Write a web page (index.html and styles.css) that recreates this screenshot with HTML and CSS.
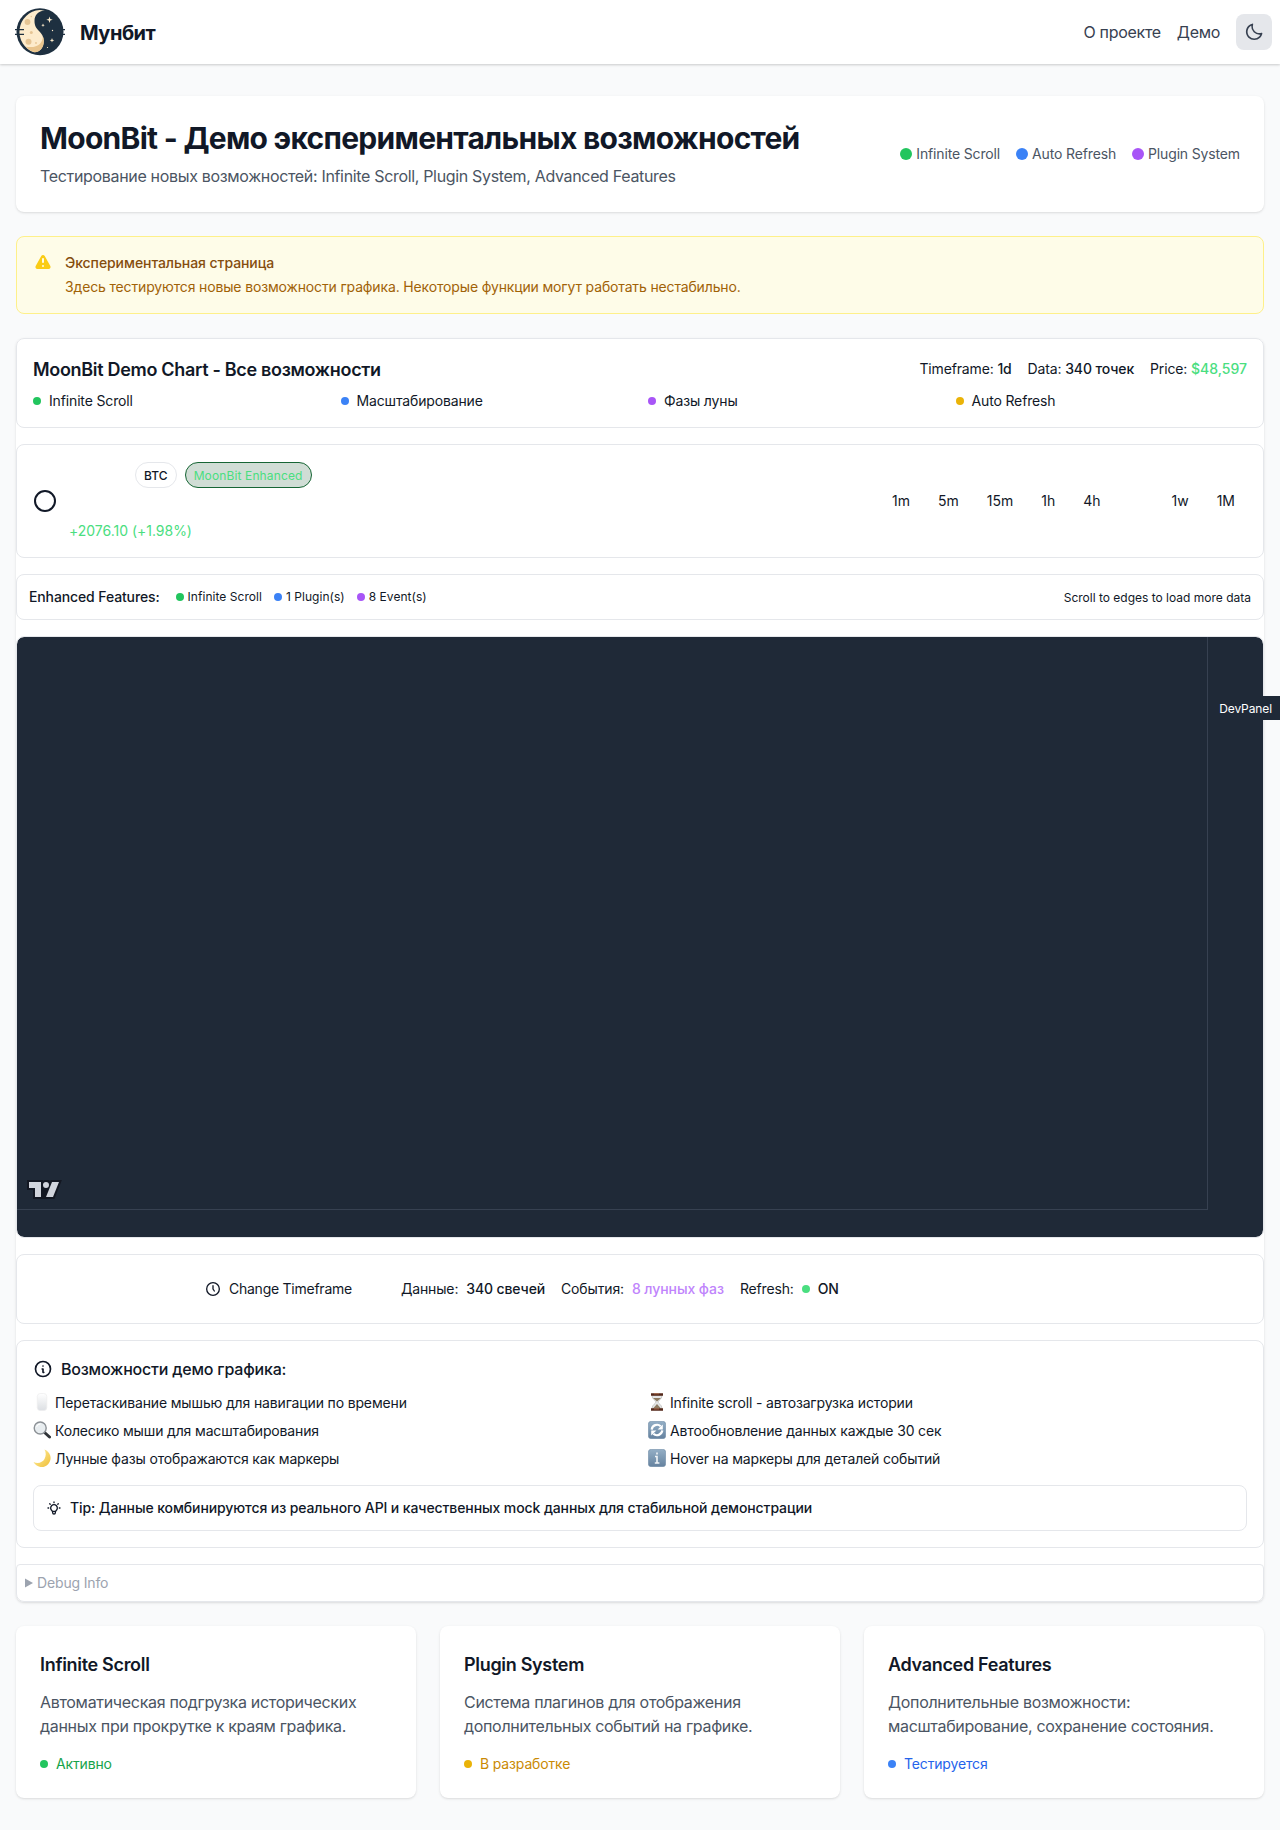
FILE: index.html
```html
<!DOCTYPE html>
<html lang="ru">
<head>
<meta charset="utf-8">
<title>Мунбит</title>
<link rel="stylesheet" href="styles.css">
</head>
<body>
<header class="topbar">
  <div class="brand">
    <svg class="brand-logo" viewBox="0 0 64 64">
      <circle cx="32" cy="31.800" r="23.500" fill="#1e3040"/>
      <path d="M31.500 10A21.800 21.800 0 0 0 26 52.300C31.500 52.500 35.800 48 35.800 41C35.800 36.500 33.500 33.500 31 31C28.500 28.500 26.500 26 26.500 21C26.500 15 30 11 37 10.500Z" fill="#fdebcb"/>
      <path d="M34.800 36.500C34.800 43 30 48.500 18 46.800C20.500 49.800 23.500 51.800 27 52.200C32 52 35.800 47.500 35.800 41C35.800 39 35.400 37.800 34.800 36.500Z" fill="#e9c48c"/>
      <g fill="#e6c594"><circle cx="19.500" cy="22" r="2.900"/><circle cx="20.500" cy="41.800" r="3"/><circle cx="23.300" cy="32.500" r="1.500"/><circle cx="23.300" cy="16.500" r=".7"/><circle cx="28" cy="43" r=".9"/></g>
      <g fill="#fdebcb"><path d="M41.500 16.500l.8 2.400 2.400.8-2.400.8-.8 2.400-.8-2.400-2.400-.8 2.400-.8zM44 38l.6 1.700 1.700.6-1.700.6-.6 1.700-.6-1.700-1.700-.6 1.700-.6zM35 23.500l.5 1.200 1.200.5-1.200.5-.5 1.200-.5-1.200-1.200-.5 1.200-.5z"/><circle cx="44.500" cy="30.500" r=".7"/><circle cx="39.500" cy="47.500" r=".6"/></g>
      <path d="M7 29.700h9M7 34.300h9M54 29.700h3M54 34.300h3" stroke="#1e3040" stroke-width="1.300"/>
    </svg>
    <span class="brand-name">Мунбит</span>
  </div>
  <nav class="nav">
    <a>О проекте</a>
    <a>Демо</a>
    <button class="theme-btn" aria-label="Тема">
      <svg width="20" height="20" viewBox="0 0 24 24" fill="currentColor"><path d="M20.742 13.045a8.088 8.088 0 0 1-2.077.271c-2.135 0-4.140-.83-5.646-2.336a8.025 8.025 0 0 1-2.064-7.723A1 1 0 0 0 9.730 2.034a10.014 10.014 0 0 0-4.489 2.582c-3.898 3.898-3.898 10.243 0 14.143a9.937 9.937 0 0 0 7.072 2.930 9.930 9.930 0 0 0 7.070-2.929 10.007 10.007 0 0 0 2.583-4.491 1.001 1.001 0 0 0-1.224-1.224zm-2.772 4.301a7.947 7.947 0 0 1-5.656 2.343 7.953 7.953 0 0 1-5.658-2.344c-3.118-3.119-3.118-8.195 0-11.314a7.923 7.923 0 0 1 2.060-1.483 10.027 10.027 0 0 0 2.890 7.848 9.972 9.972 0 0 0 7.848 2.891 8.036 8.036 0 0 1-1.484 2.059z"/></svg>
    </button>
  </nav>
</header>

<main class="page">
  <section class="hero surface">
    <div>
      <h1>MoonBit - Демо экспериментальных возможностей</h1>
      <p>Тестирование новых возможностей: Infinite Scroll, Plugin System, Advanced Features</p>
    </div>
    <div class="legend">
      <span><i class="dot big green"></i>Infinite Scroll</span>
      <span><i class="dot big blue"></i>Auto Refresh</span>
      <span><i class="dot big purple"></i>Plugin System</span>
    </div>
  </section>

  <section class="alert">
    <svg width="20" height="20" viewBox="0 0 20 20" fill="#facc15"><path fill-rule="evenodd" clip-rule="evenodd" d="M8.257 3.099c.765-1.360 2.722-1.360 3.486 0l5.580 9.920c.75 1.334-.213 2.980-1.742 2.980H4.420c-1.530 0-2.493-1.646-1.743-2.980l5.580-9.920zM11 13a1 1 0 11-2 0 1 1 0 012 0zm-1-8a1 1 0 00-1 1v3a1 1 0 002 0V6a1 1 0 00-1-1z"/></svg>
    <div>
      <h3>Экспериментальная страница</h3>
      <p>Здесь тестируются новые возможности графика. Некоторые функции могут работать нестабильно.</p>
    </div>
  </section>

  <section class="stack surface">
    <div class="panel">
      <div class="row between">
        <h2>MoonBit Demo Chart - Все возможности</h2>
        <div class="row stats">
          <span>Timeframe: <b>1d</b></span>
          <span>Data: <b>340 точек</b></span>
          <span>Price: <em>$48,597</em></span>
        </div>
      </div>
      <div class="grid4">
        <span><i class="dot green"></i>Infinite Scroll</span>
        <span><i class="dot blue"></i>Масштабирование</span>
        <span><i class="dot purple"></i>Фазы луны</span>
        <span><i class="dot yellow"></i>Auto Refresh</span>
      </div>
    </div>

    <div class="panel row between">
      <div class="row symbol">
        <svg width="24" height="24" viewBox="0 0 24 24" fill="none" stroke="currentColor" stroke-width="2"><circle cx="12" cy="12" r="10"/></svg>
        <div class="quote">
          <div class="row pills">
            <span class="pill">BTC</span>
            <span class="pill active">MoonBit Enhanced</span>
          </div>
          <div class="change">+2076.10 (+1.98%)</div>
        </div>
      </div>
      <div class="row frames">
        <span>1m</span><span>5m</span><span>15m</span><span>1h</span><span>4h</span><span class="selected"></span><span>1w</span><span>1M</span>
      </div>
    </div>

    <div class="panel slim row between">
      <div class="row enhanced">
        <strong>Enhanced Features:</strong>
        <div class="row small">
          <span><i class="dot green"></i>Infinite Scroll</span>
          <span><i class="dot blue"></i>1 Plugin(s)</span>
          <span><i class="dot purple"></i>8 Event(s)</span>
        </div>
      </div>
      <span class="hint">Scroll to edges to load more data</span>
    </div>

    <div class="chart">
      <div class="plot">
        <svg width="35" height="19" viewBox="0 0 35 19"><path fill="#131722" d="M0 0H16V1A5 5 0 0 1 23.200 1.300L23.700 0H34.900L27.400 19H6V10H0Z"/><path fill="#d1d4dc" d="M14 2H2v6h6v9h6V2Zm12 15h-7l6-15h7l-6 15Zm-7-9a3 3 0 1 0 0-6 3 3 0 0 0 0 6Z"/></svg>
      </div>
      <div class="price-axis"></div>
    </div>

    <div class="panel controls row">
      <button class="tf-btn">
        <svg width="16" height="16" viewBox="0 0 24 24" class="line"><circle cx="12" cy="12" r="9.500"/><path d="M12 7v5l2 3"/></svg>
        Change Timeframe
      </button>
      <div class="row stats">
        <span class="pair">Данные: <b>340 свечей</b></span>
        <span class="pair">События: <u>8 лунных фаз</u></span>
        <span class="pair">Refresh: <i class="dot lime"></i><b>ON</b></span>
      </div>
    </div>

    <div class="panel">
      <div class="row features-title">
        <svg width="20" height="20" viewBox="0 0 24 24" class="line"><circle cx="12" cy="12" r="9"/><path d="M12 8.500h.01M11 12h1v4h1"/></svg>
        <h3>Возможности демо графика:</h3>
      </div>
      <div class="grid2">
        <span><svg class="emoji" viewBox="0 0 18 18"><defs><linearGradient id="ms" x2="0" y2="1"><stop offset="0" stop-color="#fff"/><stop offset="1" stop-color="#dcdfe3"/></linearGradient></defs><rect x="4.300" y=".5" width="9.500" height="17" rx="3" fill="url(#ms)" stroke="#ececee" stroke-width=".7"/></svg>Перетаскивание мышью для навигации по времени</span>
        <span><svg class="emoji" viewBox="0 0 18 18"><path d="M4 2.500h10c0 4-4 5-4 6.500s4 2.500 4 6.500H4c0-4 4-5 4-6.500s-4-2.500-4-6.500z" fill="#e4e6e7" stroke="#b3b3b0" stroke-width=".6"/><path d="M5 5h8L9 8.600zM9 11l4 4.500H5z" fill="#8d7b62"/><path d="M3 .3h12v2.400H3zM3 15.300h12v2.400H3z" fill="#54281b"/><path d="M6 .8h5M6 15.900h5" stroke="#b87550" stroke-width=".8"/></svg>Infinite scroll - автозагрузка истории</span>
        <span><svg class="emoji" viewBox="0 0 18 18"><path d="M11 11l5.500 5" stroke="#303438" stroke-width="3" stroke-linecap="round"/><circle cx="7.200" cy="7" r="6" fill="#e8edf0" stroke="#8c9196" stroke-width="1.400"/><path d="M3.500 6a4 4 0 0 1 4-3" stroke="#fff" fill="none"/></svg>Колесико мыши для масштабирования</span>
        <span><svg class="emoji" viewBox="0 0 18 18"><defs><linearGradient id="tile" x2="0" y2="1"><stop offset="0" stop-color="#94afc6"/><stop offset="1" stop-color="#65829f"/></linearGradient></defs><rect x=".3" y=".3" width="17.400" height="17.400" rx="3" fill="url(#tile)" stroke="#7590aa" stroke-width=".6"/><path d="M3.700 8.600a5.400 5.400 0 0 1 9-3.400M14.300 9.400a5.400 5.400 0 0 1-9 3.400" fill="none" stroke="#fff" stroke-width="2.200"/><path d="M14.800 3.400v5H9.600zM3.200 14.600v-5h5.200z" fill="#fff"/></svg>Автообновление данных каждые 30 сек</span>
        <span><svg class="emoji" viewBox="0 0 18 18"><defs><linearGradient id="moon" x2="1" y2="1"><stop offset=".3" stop-color="#fbe486"/><stop offset="1" stop-color="#efbd38"/></linearGradient></defs><path d="M11.500.5A9 9 0 1 1 .5 13C5 15 9.500 13.500 11.500 10C13.300 6.800 13 3.200 11.500.5Z" fill="url(#moon)"/></svg>Лунные фазы отображаются как маркеры</span>
        <span><svg class="emoji" viewBox="0 0 18 18"><rect x=".3" y=".3" width="17.400" height="17.400" rx="3" fill="url(#tile)" stroke="#7590aa" stroke-width=".6"/><path d="M9 3.500v2M7 7.500h2V14M6.800 14h4.600" fill="none" stroke="#f0f4f7" stroke-width="1.600"/></svg>Hover на маркеры для деталей событий</span>
      </div>
      <div class="tip row">
        <svg width="16" height="16" viewBox="0 0 24 24" class="line"><path d="M3 12h1m8-9v1m8 8h1M5.600 5.600l.7.7m12.100-.7l-.7.7M9 16a5 5 0 1 1 6 0a3.500 3.500 0 0 0-1 3a2 2 0 0 1-4 0a3.500 3.500 0 0 0-1-3M9.700 17h4.600"/></svg>
        <span>Tip: Данные комбинируются из реального API и качественных mock данных для стабильной демонстрации</span>
      </div>
    </div>

    <div class="debug row">
      <svg width="8" height="10" viewBox="0 0 8 10" fill="currentColor"><path d="M0 .5L8 5 0 9.500z"/></svg>
      <span>Debug Info</span>
    </div>
  </section>

  <section class="cards">
    <article class="surface">
      <h2>Infinite Scroll</h2>
      <p>Автоматическая подгрузка исторических данных при прокрутке к краям графика.</p>
      <span class="status ok"><i class="dot green"></i>Активно</span>
    </article>
    <article class="surface">
      <h2>Plugin System</h2>
      <p>Система плагинов для отображения дополнительных событий на графике.</p>
      <span class="status dev"><i class="dot yellow"></i>В разработке</span>
    </article>
    <article class="surface">
      <h2>Advanced Features</h2>
      <p>Дополнительные возможности: масштабирование, сохранение состояния.</p>
      <span class="status test"><i class="dot blue"></i>Тестируется</span>
    </article>
  </section>
</main>
<div class="devpanel">DevPanel</div>
</body>
</html>
```
FILE: styles.css
```css
* { box-sizing: border-box; margin: 0; padding: 0; }
body { font: 14px/20px Inter, "Liberation Sans", sans-serif; letter-spacing: -.15px; color: #111827; background: #f9fafb; }
svg { display: block; flex: none; }
b, strong { font-weight: 500; letter-spacing: -.12px; }
em, u { font-style: normal; text-decoration: none; }
button { font: inherit; color: inherit; border: 0; background: none; }
.row { display: flex; align-items: center; }
.between { justify-content: space-between; }
.line { fill: none; stroke: currentColor; stroke-width: 2; stroke-linecap: round; stroke-linejoin: round; }

.topbar { height: 64px; padding: 0 8px; display: flex; align-items: center; justify-content: space-between; background: #fff; box-shadow: 0 1px 3px rgba(0,0,0,.1), 0 1px 2px rgba(0,0,0,.1); }
.brand { display: flex; align-items: center; gap: 8px; }
.brand-logo { width: 64px; height: 64px; }
.brand-name { padding-top: 2px; font-size: 20px; line-height: 28px; font-weight: 700; letter-spacing: -.48px; }
.nav { display: flex; align-items: center; gap: 16px; font-size: 16px; line-height: 24px; letter-spacing: -.3px; color: #374151; }
.theme-btn { width: 36px; height: 36px; padding: 8px; border-radius: 8px; background: #e5e7eb; }

.page { padding: 32px 16px; display: flex; flex-direction: column; gap: 24px; }
.surface { background: #fff; border-radius: 8px; box-shadow: 0 1px 3px rgba(0,0,0,.1), 0 1px 2px -1px rgba(0,0,0,.1); }
.dot { flex: none; width: 8px; height: 8px; border-radius: 50%; }
.dot.big { width: 12px; height: 12px; }
.green { background: #22c55e; }
.blue { background: #3b82f6; }
.purple { background: #a855f7; }
.yellow { background: #eab308; }
.lime { background: #4ade80; }

.hero { padding: 24px; display: flex; align-items: center; justify-content: space-between; }
.hero h1 { font-size: 30px; line-height: 36px; font-weight: 700; letter-spacing: -.72px; margin-bottom: 8px; }
.hero p { font-size: 16px; line-height: 24px; letter-spacing: -.33px; color: #4b5563; }
.legend { display: flex; gap: 16px; color: #4b5563; }
.legend span { display: flex; align-items: center; gap: 4px; }

.alert { display: flex; gap: 12px; padding: 16px; border: 1px solid #fef08a; border-radius: 8px; background: #fefce8; }
.alert h3 { font-size: 14px; font-weight: 500; letter-spacing: -.07px; color: #854d0e; margin-bottom: 4px; }
.alert p { color: #a16207; }

.stack { display: flex; flex-direction: column; gap: 16px; }
.panel { padding: 16px; border: 1px solid #e5e7eb; border-radius: 8px; }
.panel h2, .cards h2 { padding-top: 2px; font-size: 18px; line-height: 26px; font-weight: 600; letter-spacing: -.31px; }
.stats { gap: 16px; }
.stats em { color: #4ade80; font-weight: 500; letter-spacing: 0; }
.stats u { color: #c084fc; font-weight: 500; letter-spacing: -.07px; }
.grid4 { display: grid; grid-template-columns: repeat(4, 1fr); gap: 16px; margin-top: 8px; }
.grid4 span { display: flex; align-items: center; gap: 8px; }
.symbol { gap: 12px; }
.quote { height: 80px; display: flex; flex-direction: column; justify-content: space-between; }
.pills { gap: 8px; height: 28px; padding-left: 66px; }
.pill { padding: 5px 8px 3px; font-size: 12px; line-height: 16px; font-weight: 500; letter-spacing: .05px; border: 1px solid #e5e7eb; border-radius: 13px; }
.pill.active { color: #4ade80; border-color: #166534; background: #d0ddd5; font-weight: 400; letter-spacing: .13px; }
.change { color: #4ade80; letter-spacing: -.02px; }
.frames { gap: 4px; letter-spacing: 0; }
.frames span { padding: 6px 12px; }
.frames .selected { width: 39px; }
.slim { padding: 12px; }
.enhanced { gap: 16px; }
.small { gap: 12px; font-size: 12px; letter-spacing: .04px; }
.small span { display: flex; align-items: center; gap: 4px; }
.hint { padding-top: 1px; font-size: 12px; line-height: 19px; letter-spacing: 0; }

.chart { height: 602px; display: grid; grid-template: 573px 1fr / 1191px 1fr; border: 1px solid #e5e7eb; border-radius: 8px; overflow: hidden; background: #1f2937; background-clip: padding-box; }
.plot { display: flex; align-items: flex-end; padding: 0 0 10px 10px; border-right: 1px solid #374151; border-bottom: 1px solid #374151; }

.controls { height: 70px; padding-left: 188px; gap: 49px; }
.tf-btn { display: flex; align-items: center; gap: 8px; letter-spacing: -.25px; }
.pair { display: flex; align-items: center; gap: 8px; }

.features-title { gap: 8px; margin-bottom: 12px; }
.features-title h3 { font-size: 16px; line-height: 24px; font-weight: 500; letter-spacing: -.2px; }
.grid2 { display: grid; grid-template-columns: 1fr 1fr; gap: 8px 16px; }
.grid2 span { display: flex; align-items: flex-start; gap: 4px; }
.emoji { width: 18px; height: 18px; }
.tip { margin-top: 16px; padding: 12px; gap: 8px; border: 1px solid #e5e7eb; border-radius: 8px; font-weight: 500; letter-spacing: -.1px; }
.debug { padding: 8px; gap: 4px; border: 1px solid #e5e7eb; border-radius: 4px 4px 8px 8px; color: #9ca3af; }

.cards { display: grid; grid-template-columns: repeat(3, 1fr); gap: 24px; }
.cards article { padding: 24px; }
.cards h2 { margin-bottom: 12px; }
.cards p { font-size: 16px; line-height: 24px; letter-spacing: -.31px; color: #4b5563; margin-bottom: 16px; }
.status { display: flex; align-items: center; gap: 8px; }
.ok { color: #16a34a; }
.dev { color: #ca8a04; }
.test { color: #2563eb; }

.devpanel { position: fixed; right: 0; top: 696px; padding: 5px 8px 3px; font-size: 12px; line-height: 16px; letter-spacing: -.1px; color: #fff; background: #1f2937; }
```
